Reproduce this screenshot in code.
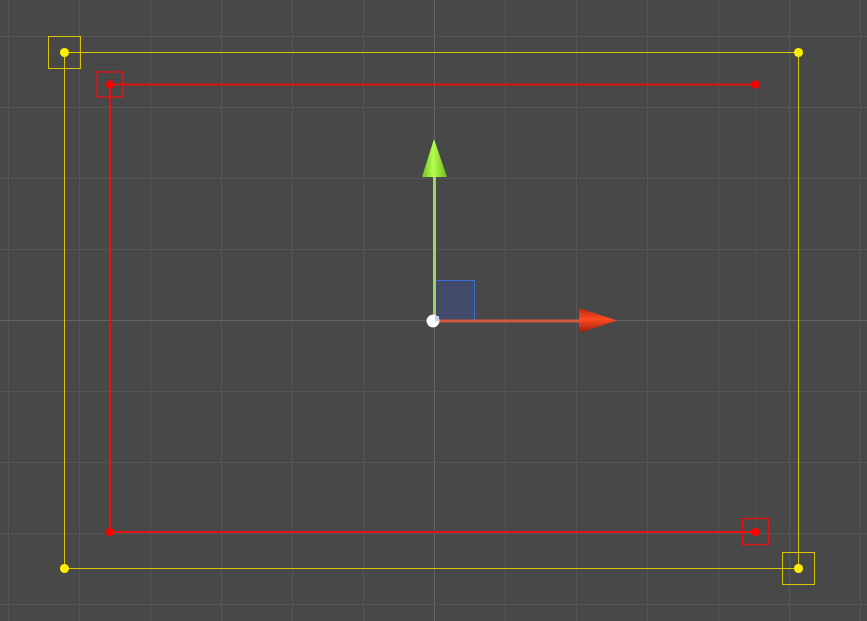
import React from "react";

const GRID_X = [8, 79, 150, 221, 292, 363, 434, 505, 576, 647, 718, 789, 860];
const GRID_Y = [36, 107, 178, 249, 320, 391, 462, 533, 604];

function Grid() {
  return (
    <g>
      {GRID_X.map((x) => (
        <line
          key={`x${x}`}
          x1={x + 0.5}
          y1={0}
          x2={x + 0.5}
          y2={621}
          stroke={x === 434 ? "#646464" : "#555555"}
          strokeWidth={1}
        />
      ))}
      {GRID_Y.map((y) => (
        <line
          key={`y${y}`}
          x1={0}
          y1={y + 0.5}
          x2={867}
          y2={y + 0.5}
          stroke={y === 320 ? "#646464" : "#555555"}
          strokeWidth={1}
        />
      ))}
    </g>
  );
}

function Bounds() {
  const yellow = "#d8c400";
  const red = "#e01414";
  return (
    <g>
      {/* outer (yellow) rect */}
      <rect x={64.5} y={52.5} width={734} height={516} fill="none" stroke={yellow} strokeWidth={1} />
      <rect x={48.5} y={36.5} width={32} height={32} fill="none" stroke={yellow} strokeWidth={1} />
      <rect x={782.5} y={552.5} width={32} height={32} fill="none" stroke={yellow} strokeWidth={1} />
      {[
        [64.5, 52.5],
        [798.5, 52.5],
        [64.5, 568.5],
        [798.5, 568.5],
      ].map(([cx, cy]) => (
        <circle key={`${cx}-${cy}`} cx={cx} cy={cy} r={4.5} fill="#ffee00" />
      ))}

      {/* inner (red) rect: right edge is thinner */}
      <line x1={110} y1={84.5} x2={755.5} y2={84.5} stroke={red} strokeWidth={1.8} />
      <line x1={110} y1={84} x2={110} y2={532} stroke={red} strokeWidth={2.2} />
      <line x1={110} y1={532} x2={755.5} y2={532} stroke={red} strokeWidth={2} />
      <line x1={755.5} y1={84} x2={755.5} y2={532} stroke="#c81c1c" strokeWidth={1} />
      <rect x={97} y={72} width={26} height={25} fill="none" stroke={red} strokeWidth={1.4} />
      <rect x={742.5} y={518.5} width={26} height={26} fill="none" stroke={red} strokeWidth={1.4} />
      {[
        [110, 84.5],
        [755.5, 84.5],
        [110, 532],
        [755.5, 532],
      ].map(([cx, cy]) => (
        <circle key={`${cx}-${cy}`} cx={cx} cy={cy} r={4} fill="#ff0000" />
      ))}
    </g>
  );
}

function MoveGizmo() {
  return (
    <g>
      <defs>
        <linearGradient id="greenCone" x1="0" y1="0" x2="1" y2="0">
          <stop offset="0" stopColor="#6fbf1c" />
          <stop offset="0.45" stopColor="#b4ff4c" />
          <stop offset="1" stopColor="#6cbd1a" />
        </linearGradient>
        <linearGradient id="redCone" x1="0" y1="0" x2="0" y2="1">
          <stop offset="0" stopColor="#b8260c" />
          <stop offset="0.45" stopColor="#ff4a22" />
          <stop offset="1" stopColor="#9a1e08" />
        </linearGradient>
      </defs>

      {/* XY plane handle */}
      <rect x={434.5} y={280.5} width={40} height={40} fill="#434b6b" stroke="#3b6fd6" strokeWidth={1} />

      {/* Y axis */}
      <line x1={434.5} y1={321} x2={434.5} y2={176} stroke="#99d65e" strokeWidth={3} />
      <polygon points="434,139 422,177 447,177" fill="url(#greenCone)" />

      {/* X axis */}
      <line x1={434} y1={321} x2={580} y2={321} stroke="#d2583e" strokeWidth={3} />
      <polygon points="579,308 579,333 617,320.5" fill="url(#redCone)" />

      {/* center */}
      <circle cx={433} cy={321} r={6.5} fill="#ffffff" />
      <rect x={435} y={316} width={4} height={5} fill="#c4cbf0" />
    </g>
  );
}

export default function App() {
  return (
    <div className="h-[621px] w-[867px] overflow-hidden bg-[#484848]">
      <svg width="867" height="621" viewBox="0 0 867 621" className="block">
        <Grid />
        <Bounds />
        <MoveGizmo />
      </svg>
    </div>
  );
}
